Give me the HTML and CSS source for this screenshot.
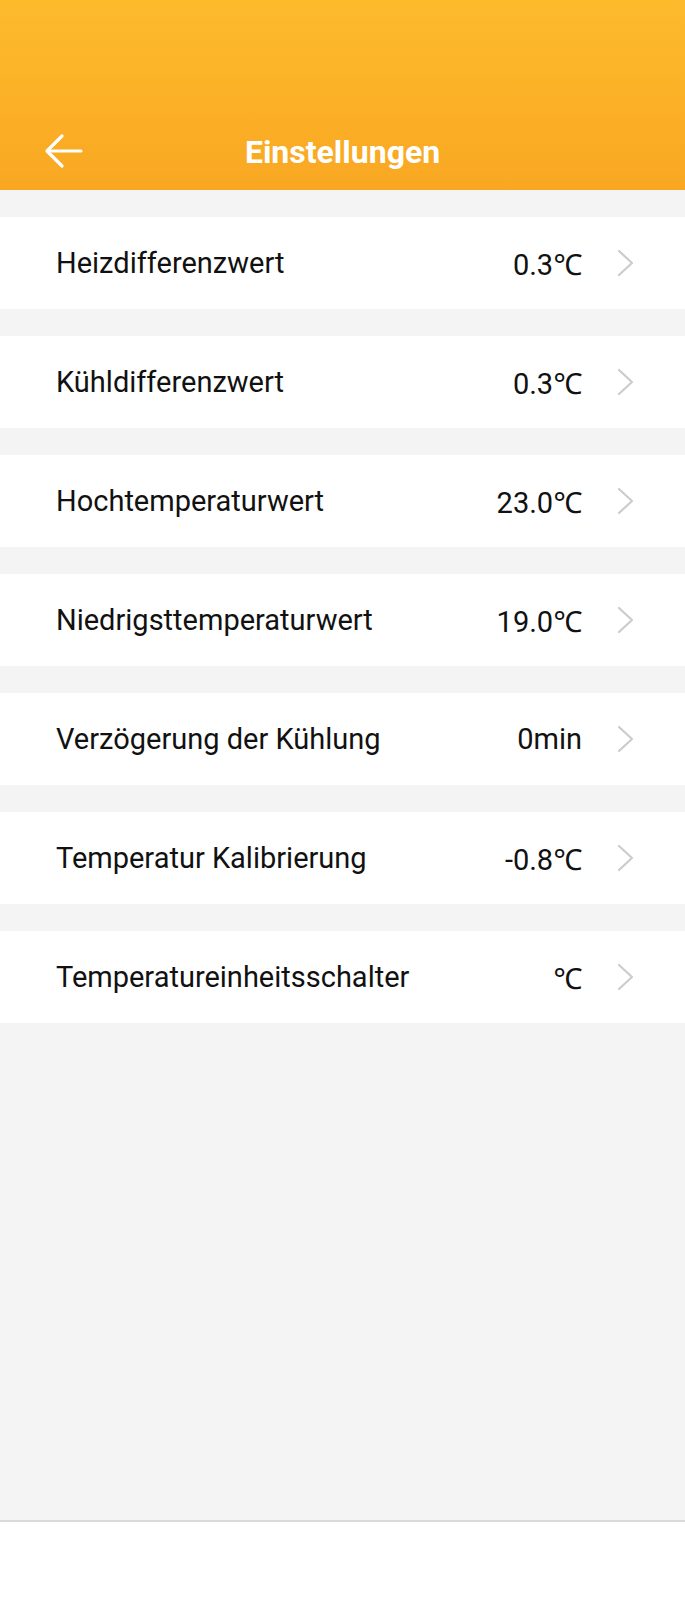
FILE: index.html
```html
<!DOCTYPE html>
<html lang="de">
<head>
  <meta charset="UTF-8">
  <title>Einstellungen</title>
  <link rel="stylesheet" href="styles.css">
</head>
<body>

  <header class="topbar">
    <button class="back" aria-label="Zurück">
      <svg width="40" height="36" viewBox="0 0 40 36" fill="none" stroke="#fff" stroke-width="3.2" stroke-linecap="round" stroke-linejoin="round">
        <path d="M37 18H4"/>
        <path d="M18 3L3 18l15 15"/>
      </svg>
    </button>
    <h1 class="title">Einstellungen</h1>
  </header>

  <main class="list">
    <div class="row">
      <span class="label">Heizdifferenzwert</span>
      <span class="value">0.3℃</span>
      <svg class="chev" width="17" height="28" viewBox="0 0 17 28"><path d="M2 2l13 12L2 26"/></svg>
    </div>
    <div class="row">
      <span class="label">Kühldifferenzwert</span>
      <span class="value">0.3℃</span>
      <svg class="chev" width="17" height="28" viewBox="0 0 17 28"><path d="M2 2l13 12L2 26"/></svg>
    </div>
    <div class="row">
      <span class="label">Hochtemperaturwert</span>
      <span class="value">23.0℃</span>
      <svg class="chev" width="17" height="28" viewBox="0 0 17 28"><path d="M2 2l13 12L2 26"/></svg>
    </div>
    <div class="row">
      <span class="label">Niedrigsttemperaturwert</span>
      <span class="value">19.0℃</span>
      <svg class="chev" width="17" height="28" viewBox="0 0 17 28"><path d="M2 2l13 12L2 26"/></svg>
    </div>
    <div class="row">
      <span class="label">Verzögerung der Kühlung</span>
      <span class="value">0min</span>
      <svg class="chev" width="17" height="28" viewBox="0 0 17 28"><path d="M2 2l13 12L2 26"/></svg>
    </div>
    <div class="row">
      <span class="label">Temperatur Kalibrierung</span>
      <span class="value">-0.8℃</span>
      <svg class="chev" width="17" height="28" viewBox="0 0 17 28"><path d="M2 2l13 12L2 26"/></svg>
    </div>
    <div class="row">
      <span class="label">Temperatureinheitsschalter</span>
      <span class="value">℃</span>
      <svg class="chev" width="17" height="28" viewBox="0 0 17 28"><path d="M2 2l13 12L2 26"/></svg>
    </div>
  </main>

  <footer class="bottom"></footer>

</body>
</html>
```

FILE: styles.css
```css
body {
  margin: 0;
  font-family: Roboto, "Noto Sans", sans-serif;
  background-color: #f4f4f4;
  color: #111;
  display: flex;
  flex-direction: column;
  min-height: 1600px;
}
.topbar {
  height: 190px;
  background: linear-gradient(#fdbb2c, #f9a722);
  display: flex;
  align-items: flex-end;
  justify-content: center;
  position: relative;
}
.back {
  position: absolute;
  left: 44px;
  top: 133px;
  background: none;
  border: none;
  padding: 0;
  width: 40px;
  height: 36px;
}
.back svg {
  display: block;
}
.title {
  margin: 0 0 16px;
  height: 44px;
  line-height: 44px;
  font-size: 32px;
  font-weight: bold;
  color: #fff;
}
.list {
  flex: 1;
  display: flex;
  flex-direction: column;
  gap: 27px;
  padding-top: 27px;
}
.row {
  height: 92px;
  background-color: #fff;
  display: flex;
  align-items: center;
  padding: 0 51px 0 56px;
  font-size: 29px;
}
.label {
  flex: 1;
}
.value {
  margin-right: 35px;
}
.chev {
  display: block;
  fill: none;
  stroke: #cccccc;
  stroke-width: 2.2;
  stroke-linecap: round;
  stroke-linejoin: round;
}
.bottom {
  height: 78px;
  background-color: #fff;
  border-top: 2px solid #dadada;
}
```
